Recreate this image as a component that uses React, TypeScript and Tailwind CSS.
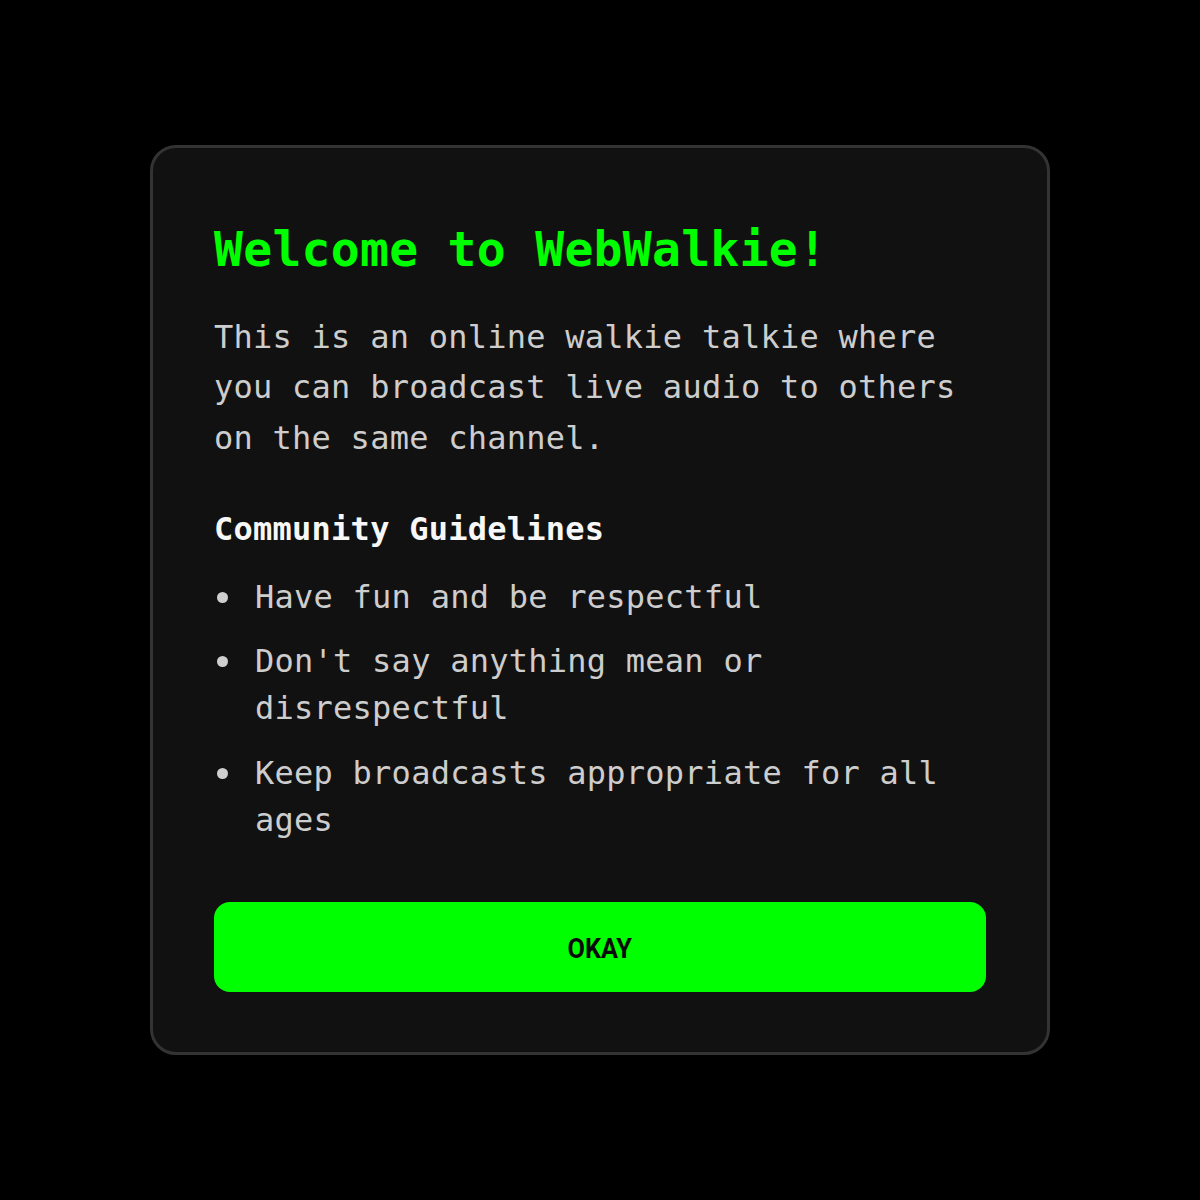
const guidelines = [
  'Have fun and be respectful',
  "Don't say anything mean or disrespectful",
  'Keep broadcasts appropriate for all ages',
];

export default function App() {
  return (
    <div className="min-h-screen bg-black flex items-center justify-center font-['DejaVu_Sans_Mono',monospace]">
      <div className="w-[900px] bg-[#111111] border-[3px] border-[#333333] rounded-[26px] px-[61px] pt-[73px] pb-[60px]">
        <h1 className="text-[48px] leading-[56px] font-bold text-[#00ff00] tracking-[0.3px]">
          Welcome to WebWalkie!
        </h1>

        <p className="mt-[34.5px] text-[32px] leading-[50.5px] text-[#cdcdcd] tracking-[0.25px]">
          This is an online walkie talkie where you can broadcast live audio to others on the same channel.
        </p>

        <h2 className="mt-[46px] text-[32px] leading-[40px] font-bold text-[#f7f7f7] tracking-[0.25px]">
          Community Guidelines
        </h2>

        {/* guidelines list */}
        <ul className="mt-[24.5px] flex flex-col gap-[17.5px]">
          {guidelines.map((g) => (
            <li key={g} className="flex items-start">
              <div className="w-[41px] h-[47px] flex items-center shrink-0">
                <span className="ml-[2.5px] w-[11px] h-[11px] rounded-full bg-[#cfcfcf]" />
              </div>
              <span className="text-[32px] leading-[47px] text-[#cdcdcd] tracking-[0.25px]">{g}</span>
            </li>
          ))}
        </ul>

        <button className="mt-[58.5px] w-full h-[90px] rounded-[16px] bg-[#00ff00] flex items-center justify-center">
          <span className="mt-[4px] font-['Roboto',sans-serif] font-bold text-[28px] text-[#0a0a0a] scale-x-[0.9]">OKAY</span>
        </button>
      </div>
    </div>
  );
}
